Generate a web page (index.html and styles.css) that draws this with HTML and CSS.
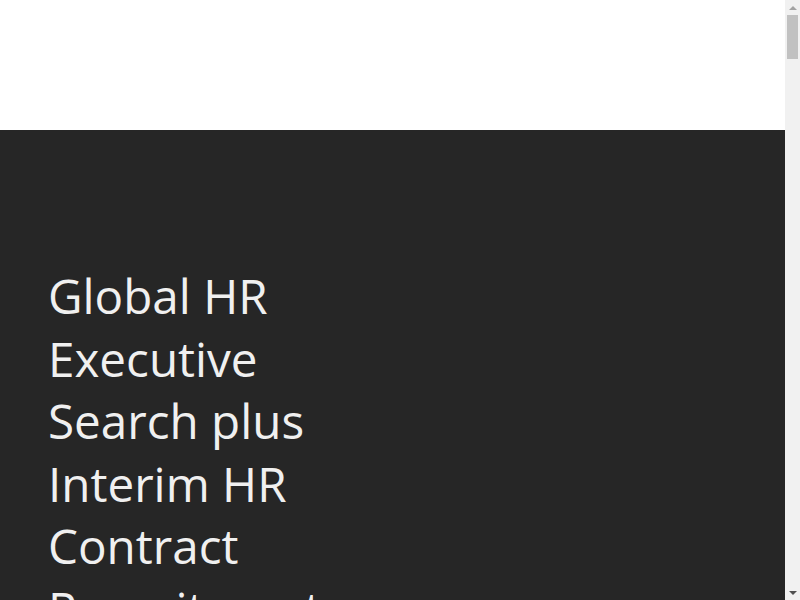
FILE: index.html
```html
<!DOCTYPE html>
<html lang="en">
<head>
<meta charset="utf-8">
<title>Global HR Executive Search</title>
<link rel="stylesheet" href="styles.css">
</head>
<body>
<div class="layout">
  <div class="page">
    <header class="site-header"></header>
    <section class="hero">
      <h1 class="hero-title">Global HR Executive Search plus Interim HR Contract Recruitment</h1>
    </section>
    <main class="content"></main>
  </div>
  <div class="scrollbar" aria-hidden="true">
    <div class="sb-button"><span class="arrow-up"></span></div>
    <div class="sb-track">
      <div class="sb-thumb"></div>
    </div>
    <div class="sb-button"><span class="arrow-down"></span></div>
  </div>
</div>
</body>
</html>
```

FILE: styles.css
```css
html, body {
  margin: 0;
  padding: 0;
  height: 100%;
  overflow: hidden;
}
body {
  font-family: "Open Sans", "Liberation Sans", sans-serif;
  background: #262626;
}
.layout {
  display: flex;
  height: 100vh;
}
.page {
  flex: 1;
  min-width: 0;
  overflow-y: scroll;
  scrollbar-width: none;
  background: #262626;
}
.site-header {
  height: 130px;
  background: #ffffff;
}
.hero {
  background: #262626;
  padding: 135px 48px 200px;
}
.hero-title {
  margin: 0;
  width: 330px;
  font-size: 47.6px;
  font-weight: 400;
  line-height: 62.5px;
  color: #f0f0f0;
}
.content {
  height: 6800px;
  background: #262626;
}
.scrollbar {
  width: 15px;
  flex: none;
  background: #f1f1f1;
  display: flex;
  flex-direction: column;
}
.sb-button {
  height: 15px;
  display: flex;
  align-items: center;
  justify-content: center;
}
.arrow-up {
  width: 0;
  height: 0;
  border-left: 4px solid transparent;
  border-right: 4px solid transparent;
  border-bottom: 4px solid #a3a3a3;
}
.arrow-down {
  width: 0;
  height: 0;
  border-left: 4px solid transparent;
  border-right: 4px solid transparent;
  border-top: 4px solid #505050;
}
.sb-track {
  flex: 1;
  padding: 0 2px;
}
.sb-thumb {
  height: 44px;
  background: #c1c1c1;
}
```
